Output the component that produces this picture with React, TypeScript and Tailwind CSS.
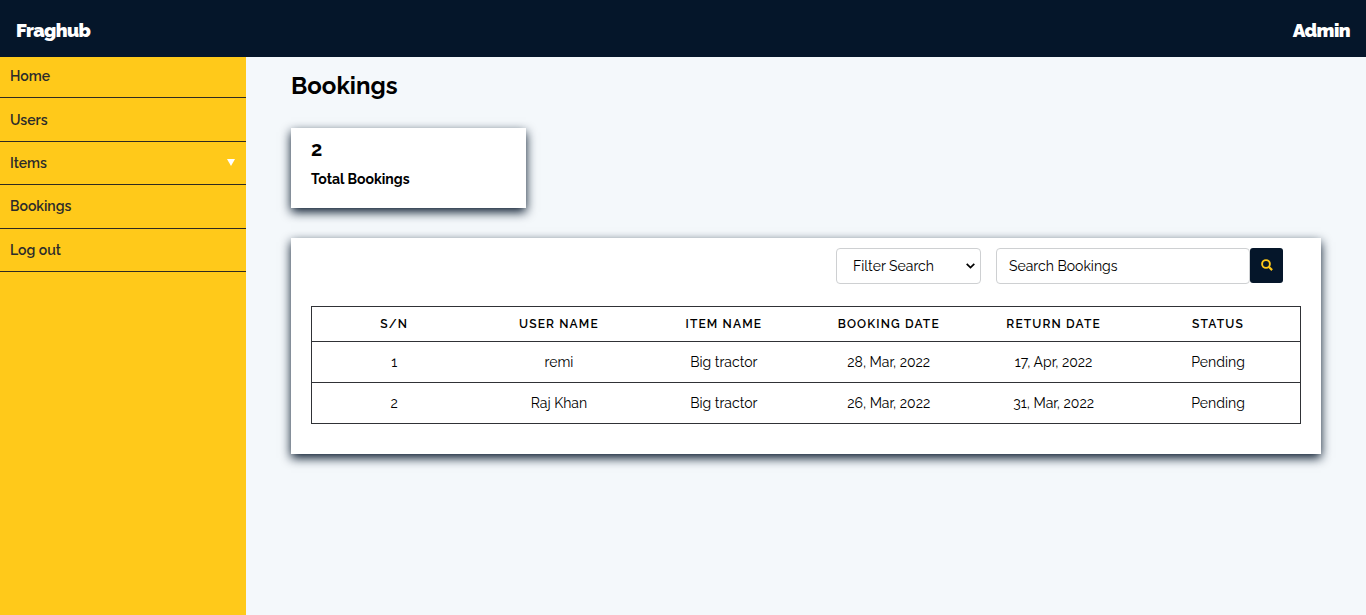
import { ReactNode } from "react";

const navItems = [
  { label: "Home", row: "h-[41px] pb-2.5" },
  { label: "Users", row: "h-[44px] pb-2.5" },
  { label: "Items", row: "h-[43px] pb-2.5", arrow: true },
  { label: "Bookings", row: "h-[44px] pb-[11px]" },
  { label: "Log out", row: "h-[43px] pb-2.5" },
];

const columns = ["S/N", "User Name", "Item Name", "Booking Date", "Return Date", "Status"];

const bookings = [
  ["1", "remi", "Big tractor", "28, Mar, 2022", "17, Apr, 2022", "Pending"],
  ["2", "Raj Khan", "Big tractor", "26, Mar, 2022", "31, Mar, 2022", "Pending"],
];

function Card({ className, children }: { className: string; children: ReactNode }) {
  return <section className={`bg-white shadow-[0_4px_10px_#05162a] ${className}`}>{children}</section>;
}

export default function App() {
  return (
    <div className="flex h-screen flex-col overflow-hidden bg-[#f4f8fb] font-[Raleway,Lato,sans-serif] text-sm text-black">
      <header className="flex h-[57px] shrink-0 items-center justify-between bg-[#05162a] px-4 pt-1 text-[19px] font-black tracking-[-0.57px] text-white">
        <span>Fraghub</span>
        <span>Admin</span>
      </header>
      <div className="flex min-h-0 flex-1">
        <nav className="w-[246px] shrink-0 bg-[#ffc91a] font-semibold text-[#2b2b2b]">
          {navItems.map((item) => (
            <a
              key={item.label}
              className={`flex items-end justify-between border-b border-[#2e2a20] pr-[11px] pl-2.5 leading-[21px] ${item.row}`}
            >
              <span>{item.label}</span>
              {item.arrow && (
                <svg className="mb-2 h-[7px] w-2" viewBox="0 0 8 7" fill="white">
                  <path d="M0 0h8L4 7z" />
                </svg>
              )}
            </a>
          ))}
        </nav>
        <main className="flex-1 px-[45px] pt-[11px]">
          <h1 className="h-[60px] text-2xl leading-9 font-bold">Bookings</h1>
          <Card className="h-20 w-[235px] px-5 pt-2 font-bold">
            <div className="text-xl leading-[26px]">2</div>
            <div className="mt-1.5 leading-[22px]">Total Bookings</div>
          </Card>
          <Card className="mt-[30px] h-[216px] px-5 pt-2.5">
            <form className="flex h-[58px] items-start justify-end pr-[18px]">
              <div className="mr-[15px] flex h-9 w-[145px] items-center justify-between rounded border border-[#ced0d2] pr-[5px] pl-4">
                <span>Filter Search</span>
                <svg className="h-[6px] w-[9px]" viewBox="0 0 9 6" fill="none" stroke="black" strokeWidth="1.7">
                  <path d="M.7.8 4.5 4.6 8.3.8" />
                </svg>
              </div>
              <div className="flex h-9 w-[254px] items-center rounded border border-[#ced0d2] px-3">Search Bookings</div>
              <button type="button" className="flex h-[35px] w-[33px] items-center justify-center rounded-[3px] bg-[#05162a] pb-px pl-px">
                <svg className="h-3 w-3" viewBox="0 0 12 12" fill="none" stroke="#ffc91a" strokeWidth="1.9">
                  <circle cx="5" cy="5" r="3.9" />
                  <path d="m7.8 7.8 3.3 3.3" strokeWidth="2.2" />
                </svg>
              </button>
            </form>
            <div className="border border-[#303236] text-center">
              <div className="grid h-[34px] grid-cols-[164.5px_repeat(4,164.9px)_1fr] items-center text-xs font-semibold tracking-[1.15px] uppercase">
                {columns.map((column) => (
                  <span key={column}>{column}</span>
                ))}
              </div>
              {bookings.map((booking) => (
                <div
                  key={booking[0]}
                  className="grid h-[41px] grid-cols-[164.5px_repeat(4,164.9px)_1fr] items-center border-t border-[#303236]"
                >
                  {booking.map((value, index) => (
                    <span key={index}>{value}</span>
                  ))}
                </div>
              ))}
            </div>
          </Card>
        </main>
      </div>
    </div>
  );
}
